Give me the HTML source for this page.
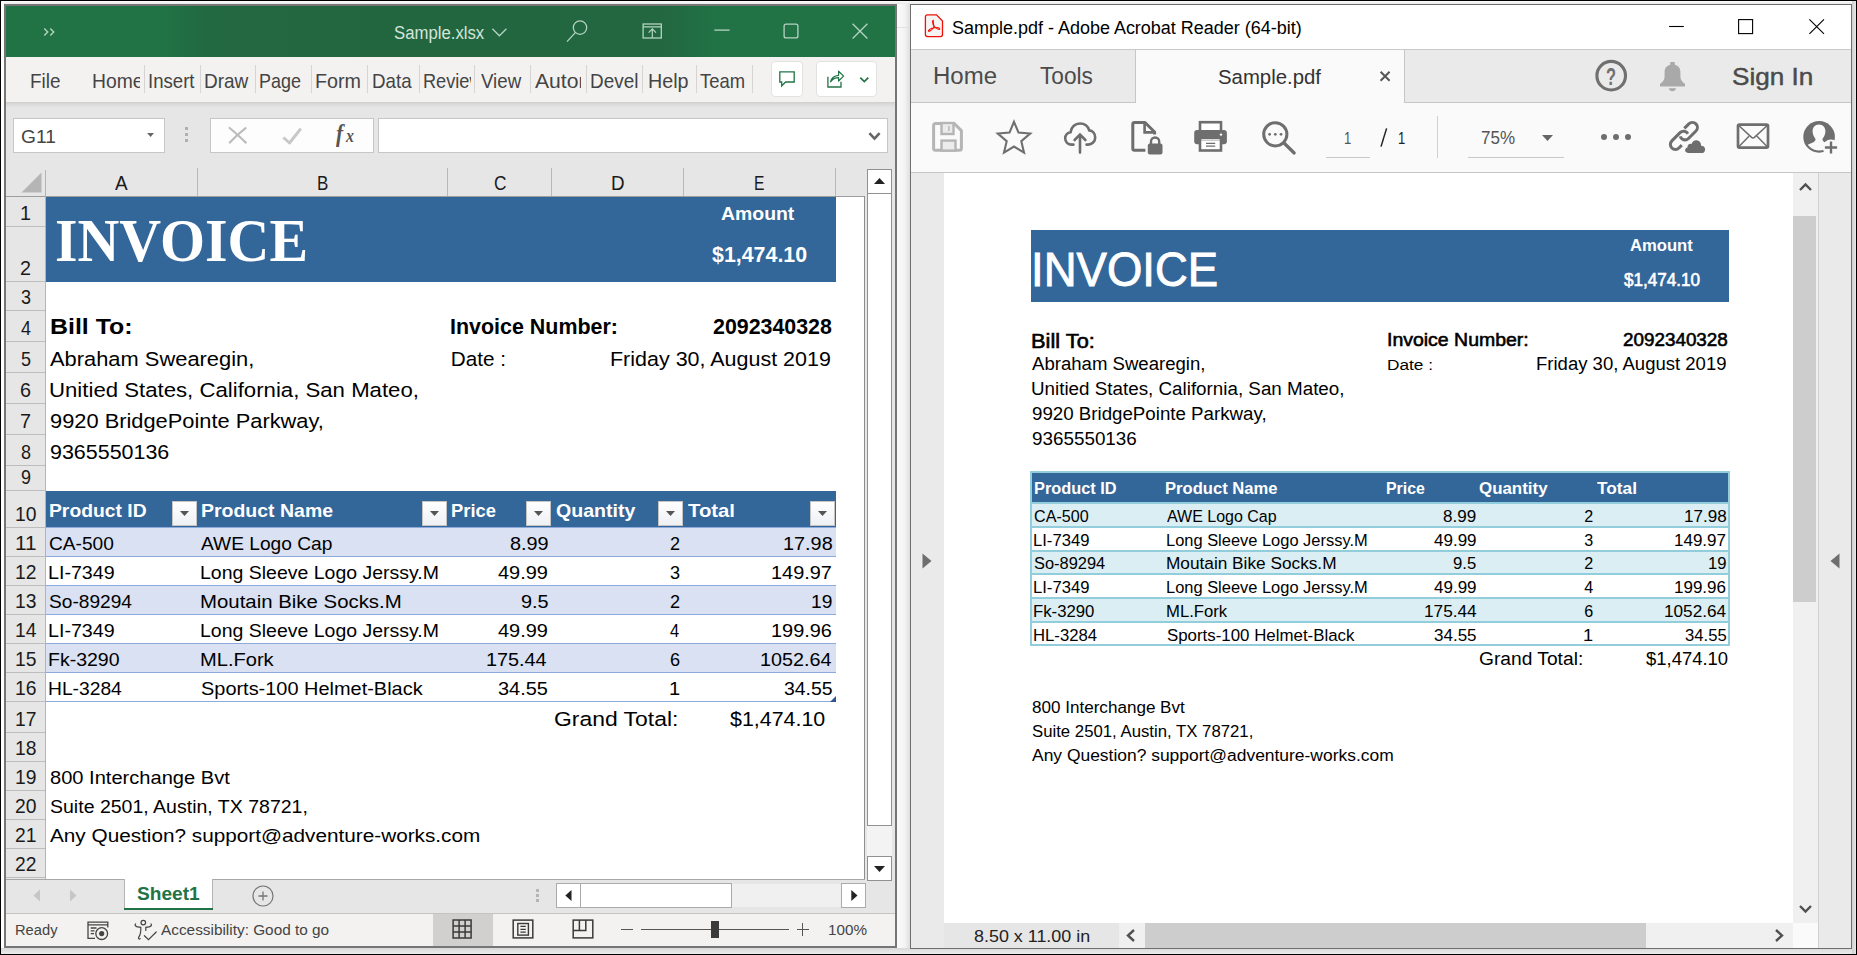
<!DOCTYPE html>
<html><head><meta charset="utf-8"><title>Sample.xlsx / Sample.pdf</title><style>
html,body{margin:0;padding:0}
body{width:1857px;height:955px;position:relative;overflow:hidden;background:#fff;font-family:"Liberation Sans",sans-serif}
body div{position:absolute;box-sizing:border-box}
.t{position:absolute;white-space:nowrap;line-height:0;height:0;transform-origin:0 0;display:block}

svg{position:absolute;overflow:visible}
</style></head>
<body>
<div style="left:0px;top:0px;width:1857px;height:955px;background:#fff;border:1px solid #000;"></div>
<div style="left:897px;top:1px;width:13px;height:953px;background:linear-gradient(90deg,#fbfbfb,#f3f3f3 60%,#dedede);"></div>
<div style="left:1px;top:948px;width:1855px;height:6px;background:linear-gradient(180deg,#d8d8d8,#ececec);"></div>
<div style="left:1px;top:1px;width:1855px;height:3px;background:linear-gradient(180deg,#fdfdfd,#e9e9e9);"></div>
<div style="left:1852px;top:1px;width:4px;height:953px;background:linear-gradient(90deg,#cfcfcf,#e6e6e6);"></div>
<div style="left:1px;top:1px;width:3px;height:947px;background:#fff;"></div>
<div style="left:897px;top:27px;width:12px;height:1px;background:#e2e2e2;"></div>
<div style="left:4px;top:4px;width:893px;height:944px;background:#767676;"></div>
<div style="left:6px;top:6px;width:889px;height:940px;background:#e6e6e6;"></div>
<div style="left:6px;top:6px;width:889px;height:51px;background:#217346;"></div>
<div style="left:160px;top:6px;width:560px;height:51px;background:linear-gradient(90deg,rgba(34,102,63,0),rgba(34,102,63,.85) 9%,rgba(34,102,63,1) 50%,rgba(34,102,63,.9) 90%,rgba(34,102,63,0));"></div>
<div style="left:6px;top:57px;width:889px;height:45px;background:#f3f2f1;"></div>
<div style="left:6px;top:102px;width:889px;height:6px;background:linear-gradient(180deg,#cfcfcf,#dcdcdc 45%,#e6e6e6);"></div>
<div style="left:144px;top:65px;width:1px;height:28px;background:#d6d4d2;"></div>
<div style="left:200px;top:65px;width:1px;height:28px;background:#d6d4d2;"></div>
<div style="left:255px;top:65px;width:1px;height:28px;background:#d6d4d2;"></div>
<div style="left:311px;top:65px;width:1px;height:28px;background:#d6d4d2;"></div>
<div style="left:367px;top:65px;width:1px;height:28px;background:#d6d4d2;"></div>
<div style="left:419px;top:65px;width:1px;height:28px;background:#d6d4d2;"></div>
<div style="left:474px;top:65px;width:1px;height:28px;background:#d6d4d2;"></div>
<div style="left:530px;top:65px;width:1px;height:28px;background:#d6d4d2;"></div>
<div style="left:586px;top:65px;width:1px;height:28px;background:#d6d4d2;"></div>
<div style="left:642px;top:65px;width:1px;height:28px;background:#d6d4d2;"></div>
<div style="left:696px;top:65px;width:1px;height:28px;background:#d6d4d2;"></div>
<div style="left:752px;top:65px;width:1px;height:28px;background:#d6d4d2;"></div>
<div style="left:771px;top:61px;width:32px;height:36px;background:#fff;border:1px solid #e4e2e0;border-radius:4px;"></div>
<div style="left:816px;top:61px;width:61px;height:36px;background:#fff;border:1px solid #e4e2e0;border-radius:4px;"></div>
<div style="left:13px;top:118px;width:152px;height:35px;background:#fff;border:1px solid #c6c6c6;"></div>
<div style="left:210px;top:118px;width:164px;height:35px;background:#fdfdfd;border:1px solid #c6c6c6;"></div>
<div style="left:378px;top:118px;width:510px;height:35px;background:#fff;border:1px solid #c6c6c6;"></div>
<div style="left:185px;top:127px;width:3px;height:3px;background:#b0b0b0;"></div>
<div style="left:185px;top:133px;width:3px;height:3px;background:#b0b0b0;"></div>
<div style="left:185px;top:139px;width:3px;height:3px;background:#b0b0b0;"></div>
<div style="left:46px;top:197px;width:819px;height:682px;background:#fff;"></div>
<div style="left:6px;top:170px;width:859px;height:27px;background:#e6e6e6;"></div>
<div style="left:6px;top:197px;width:40px;height:682px;background:#e6e6e6;"></div>
<div style="left:6px;top:196px;width:859px;height:1px;background:#9d9d9d;"></div>
<div style="left:45px;top:170px;width:1px;height:709px;background:#b4b4b4;"></div>
<div style="left:197px;top:168px;width:1px;height:28px;background:#b9b9b9;"></div>
<div style="left:447px;top:168px;width:1px;height:28px;background:#b9b9b9;"></div>
<div style="left:551px;top:168px;width:1px;height:28px;background:#b9b9b9;"></div>
<div style="left:683px;top:168px;width:1px;height:28px;background:#b9b9b9;"></div>
<div style="left:835px;top:168px;width:1px;height:28px;background:#b9b9b9;"></div>
<svg style="left:21px;top:172px" width="21" height="21"><path d="M20.5 0.5V20.5H0.5Z" fill="#b5b5b5"/></svg>
<div style="left:6px;top:226px;width:39px;height:1px;background:#bdbdbd;"></div>
<div style="left:6px;top:281px;width:39px;height:1px;background:#bdbdbd;"></div>
<div style="left:6px;top:310px;width:39px;height:1px;background:#bdbdbd;"></div>
<div style="left:6px;top:341px;width:39px;height:1px;background:#bdbdbd;"></div>
<div style="left:6px;top:372px;width:39px;height:1px;background:#bdbdbd;"></div>
<div style="left:6px;top:403px;width:39px;height:1px;background:#bdbdbd;"></div>
<div style="left:6px;top:434px;width:39px;height:1px;background:#bdbdbd;"></div>
<div style="left:6px;top:465px;width:39px;height:1px;background:#bdbdbd;"></div>
<div style="left:6px;top:490px;width:39px;height:1px;background:#bdbdbd;"></div>
<div style="left:6px;top:527px;width:39px;height:1px;background:#bdbdbd;"></div>
<div style="left:6px;top:556px;width:39px;height:1px;background:#bdbdbd;"></div>
<div style="left:6px;top:585px;width:39px;height:1px;background:#bdbdbd;"></div>
<div style="left:6px;top:614px;width:39px;height:1px;background:#bdbdbd;"></div>
<div style="left:6px;top:643px;width:39px;height:1px;background:#bdbdbd;"></div>
<div style="left:6px;top:672px;width:39px;height:1px;background:#bdbdbd;"></div>
<div style="left:6px;top:701px;width:39px;height:1px;background:#bdbdbd;"></div>
<div style="left:6px;top:732px;width:39px;height:1px;background:#bdbdbd;"></div>
<div style="left:6px;top:761px;width:39px;height:1px;background:#bdbdbd;"></div>
<div style="left:6px;top:790px;width:39px;height:1px;background:#bdbdbd;"></div>
<div style="left:6px;top:819px;width:39px;height:1px;background:#bdbdbd;"></div>
<div style="left:6px;top:848px;width:39px;height:1px;background:#bdbdbd;"></div>
<div style="left:6px;top:877px;width:39px;height:1px;background:#bdbdbd;"></div>
<div style="left:864px;top:196px;width:1px;height:683px;background:#8f8f8f;"></div>
<div style="left:6px;top:879px;width:859px;height:1px;background:#a8a8a8;"></div>
<div style="left:46px;top:197px;width:790px;height:85px;background:#336699;"></div>
<div style="left:46px;top:491px;width:790px;height:36px;background:#336699;"></div>
<div style="left:46px;top:528px;width:790px;height:28px;background:#d9e1f2;"></div>
<div style="left:46px;top:556px;width:790px;height:1px;background:#8ea9db;"></div>
<div style="left:46px;top:585px;width:790px;height:1px;background:#8ea9db;"></div>
<div style="left:46px;top:586px;width:790px;height:28px;background:#d9e1f2;"></div>
<div style="left:46px;top:614px;width:790px;height:1px;background:#8ea9db;"></div>
<div style="left:46px;top:643px;width:790px;height:1px;background:#8ea9db;"></div>
<div style="left:46px;top:644px;width:790px;height:28px;background:#d9e1f2;"></div>
<div style="left:46px;top:672px;width:790px;height:1px;background:#8ea9db;"></div>
<div style="left:46px;top:701px;width:790px;height:1px;background:#8ea9db;"></div>
<div style="left:46px;top:527px;width:790px;height:1px;background:#8ea9db;"></div>
<div style="left:830px;top:696px;width:6px;height:6px;background:#2f5597;clip-path:polygon(100% 0,100% 100%,0 100%);"></div>
<div style="left:172px;top:501px;width:25px;height:25px;background:linear-gradient(180deg,#ffffff,#eef0f4);border:1px solid #c4c4c4;"></div>
<svg style="left:180px;top:511px" width="9" height="5"><path d="M0 0H9L4.5 5Z" fill="#555"/></svg>
<div style="left:422px;top:501px;width:25px;height:25px;background:linear-gradient(180deg,#ffffff,#eef0f4);border:1px solid #c4c4c4;"></div>
<svg style="left:430px;top:511px" width="9" height="5"><path d="M0 0H9L4.5 5Z" fill="#555"/></svg>
<div style="left:526px;top:501px;width:25px;height:25px;background:linear-gradient(180deg,#ffffff,#eef0f4);border:1px solid #c4c4c4;"></div>
<svg style="left:534px;top:511px" width="9" height="5"><path d="M0 0H9L4.5 5Z" fill="#555"/></svg>
<div style="left:658px;top:501px;width:25px;height:25px;background:linear-gradient(180deg,#ffffff,#eef0f4);border:1px solid #c4c4c4;"></div>
<svg style="left:666px;top:511px" width="9" height="5"><path d="M0 0H9L4.5 5Z" fill="#555"/></svg>
<div style="left:810px;top:501px;width:25px;height:25px;background:linear-gradient(180deg,#ffffff,#eef0f4);border:1px solid #c4c4c4;"></div>
<svg style="left:818px;top:511px" width="9" height="5"><path d="M0 0H9L4.5 5Z" fill="#555"/></svg>
<div style="left:866px;top:170px;width:29px;height:709px;background:#e6e6e6;"></div>
<div style="left:867px;top:169px;width:25px;height:25px;background:#fff;border:1px solid #919191;"></div>
<div style="left:867px;top:193px;width:25px;height:633px;background:#fff;border:1px solid #919191;"></div>
<div style="left:867px;top:826px;width:25px;height:30px;background:#f3f3f3;"></div>
<div style="left:867px;top:856px;width:25px;height:25px;background:#fff;border:1px solid #919191;"></div>
<svg style="left:874px;top:178px" width="11" height="6"><path d="M0 6L5.5 0L11 6Z" fill="#222"/></svg>
<svg style="left:874px;top:866px" width="11" height="6"><path d="M0 0L5.5 6L11 0Z" fill="#222"/></svg>
<div style="left:6px;top:880px;width:860px;height:33px;background:#e6e6e6;"></div>
<div style="left:866px;top:881px;width:29px;height:32px;background:#e6e6e6;"></div>
<div style="left:124px;top:879px;width:89px;height:31px;background:#fff;border-left:1px solid #b4b4b4;border-right:1px solid #b4b4b4;"></div>
<div style="left:124px;top:908px;width:89px;height:2px;background:#217346;"></div>
<svg style="left:33px;top:889px" width="8" height="13"><path d="M7 0.5V12.5L0.5 6.5Z" fill="#c6c6c6"/></svg>
<svg style="left:69px;top:889px" width="8" height="13"><path d="M1 0.5V12.5L7.5 6.5Z" fill="#c6c6c6"/></svg>
<svg style="left:252px;top:885px" width="22" height="22"><circle cx="11" cy="11" r="10" fill="none" stroke="#767676" stroke-width="1.2"/><path d="M11 6.5V15.5M6.5 11H15.5" stroke="#767676" stroke-width="1.3"/></svg>
<div style="left:536px;top:889px;width:3px;height:3px;background:#b5b5b5;"></div>
<div style="left:536px;top:894px;width:3px;height:3px;background:#b5b5b5;"></div>
<div style="left:536px;top:899px;width:3px;height:3px;background:#b5b5b5;"></div>
<div style="left:556px;top:883px;width:25px;height:25px;background:#fff;border:1px solid #ababab;"></div>
<div style="left:580px;top:883px;width:152px;height:25px;background:#fff;border:1px solid #ababab;"></div>
<div style="left:841px;top:883px;width:25px;height:25px;background:#fff;border:1px solid #ababab;"></div>
<div style="left:732px;top:884px;width:109px;height:23px;background:#f0f0f0;"></div>
<svg style="left:565px;top:890px" width="7" height="11"><path d="M6.5 0V11L0.3 5.5Z" fill="#222"/></svg>
<svg style="left:851px;top:890px" width="7" height="11"><path d="M0.3 0V11L6.5 5.5Z" fill="#222"/></svg>
<div style="left:6px;top:914px;width:889px;height:32px;background:#f3f2f1;"></div>
<div style="left:6px;top:913px;width:889px;height:1px;background:#c4c4c4;"></div>
<div style="left:433px;top:914px;width:60px;height:32px;background:#d2d0ce;"></div>
<div style="left:641px;top:929px;width:148px;height:1px;background:#555;"></div>
<div style="left:711px;top:921px;width:8px;height:17px;background:#3b3b3b;"></div>
<div style="left:621px;top:929px;width:12px;height:1px;background:#555;"></div>
<div style="left:797px;top:929px;width:12px;height:1px;background:#555;"></div>
<div style="left:802px;top:923px;width:1px;height:13px;background:#555;"></div>
<span class="t" style="left:394.30px;top:32.50px;font-size:18.87px;color:#d3e5da;transform:scaleX(0.8872);">Sample.xlsx</span>
<span class="t" style="left:30.30px;top:81.00px;font-size:19.89px;color:#444;transform:scaleX(0.9525);">File</span>
<div style="left:90px;top:60px;width:50px;height:40px;overflow:hidden">
<span class="t" style="left:1.53px;top:21.00px;font-size:19.89px;color:#444;transform:scaleX(0.9719);">Home</span>
</div>
<span class="t" style="left:147.81px;top:81.00px;font-size:19.89px;color:#444;transform:scaleX(0.9352);">Insert</span>
<span class="t" style="left:204.04px;top:81.00px;font-size:19.89px;color:#444;transform:scaleX(0.9560);">Draw</span>
<span class="t" style="left:259.10px;top:81.00px;font-size:19.89px;color:#444;transform:scaleX(0.9038);">Page</span>
<span class="t" style="left:314.76px;top:81.00px;font-size:19.89px;color:#444;transform:scaleX(0.9930);">Form</span>
<span class="t" style="left:372.06px;top:81.00px;font-size:19.89px;color:#444;transform:scaleX(0.9421);">Data</span>
<div style="left:420px;top:60px;width:51px;height:40px;overflow:hidden">
<span class="t" style="left:2.84px;top:21.00px;font-size:19.89px;color:#444;transform:scaleX(0.9142);">Review</span>
</div>
<span class="t" style="left:481.25px;top:81.00px;font-size:19.89px;color:#444;transform:scaleX(0.9397);">View</span>
<div style="left:530px;top:60px;width:51px;height:40px;overflow:hidden">
<span class="t" style="left:4.50px;top:21.00px;font-size:19.89px;color:#444;transform:scaleX(1.0635);">Autom</span>
</div>
<div style="left:588px;top:60px;width:50px;height:40px;overflow:hidden">
<span class="t" style="left:1.55px;top:21.00px;font-size:19.89px;color:#444;transform:scaleX(0.9515);">Devel</span>
</div>
<span class="t" style="left:647.76px;top:81.00px;font-size:19.89px;color:#444;transform:scaleX(0.9919);">Help</span>
<span class="t" style="left:700.00px;top:81.00px;font-size:19.89px;color:#444;transform:scaleX(0.9263);">Team</span>
<span class="t" style="left:20.50px;top:136.50px;font-size:18.56px;color:#444;transform:scaleX(1.0341);">G11</span>
<span class="t" style="left:114.90px;top:182.90px;font-size:20.4px;color:#1a1a1a;transform:scaleX(0.9286);">A</span>
<span class="t" style="left:316.77px;top:182.90px;font-size:20.4px;color:#1a1a1a;transform:scaleX(0.8333);">B</span>
<span class="t" style="left:493.65px;top:182.90px;font-size:20.4px;color:#1a1a1a;transform:scaleX(0.8462);">C</span>
<span class="t" style="left:610.68px;top:182.90px;font-size:20.4px;color:#1a1a1a;transform:scaleX(0.9231);">D</span>
<span class="t" style="left:754.13px;top:182.90px;font-size:20.4px;color:#1a1a1a;transform:scaleX(0.7667);">E</span>
<span class="t" style="left:20.08px;top:212.80px;font-size:20.4px;color:#1a1a1a;transform:scaleX(0.9700);">1</span>
<span class="t" style="left:20.08px;top:267.80px;font-size:20.4px;color:#1a1a1a;transform:scaleX(0.9700);">2</span>
<span class="t" style="left:21.05px;top:296.80px;font-size:20.4px;color:#1a1a1a;transform:scaleX(0.8818);">3</span>
<span class="t" style="left:21.05px;top:327.80px;font-size:20.4px;color:#1a1a1a;transform:scaleX(0.8818);">4</span>
<span class="t" style="left:21.05px;top:358.80px;font-size:20.4px;color:#1a1a1a;transform:scaleX(0.8818);">5</span>
<span class="t" style="left:20.08px;top:389.80px;font-size:20.4px;color:#1a1a1a;transform:scaleX(0.9700);">6</span>
<span class="t" style="left:20.08px;top:420.80px;font-size:20.4px;color:#1a1a1a;transform:scaleX(0.9700);">7</span>
<span class="t" style="left:21.05px;top:451.80px;font-size:20.4px;color:#1a1a1a;transform:scaleX(0.8818);">8</span>
<span class="t" style="left:21.05px;top:476.80px;font-size:20.4px;color:#1a1a1a;transform:scaleX(0.8818);">9</span>
<span class="t" style="left:14.85px;top:513.80px;font-size:20.4px;color:#1a1a1a;transform:scaleX(0.9466);">10</span>
<span class="t" style="left:14.78px;top:542.80px;font-size:20.4px;color:#1a1a1a;transform:scaleX(1.0189);">11</span>
<span class="t" style="left:14.85px;top:571.80px;font-size:20.4px;color:#1a1a1a;transform:scaleX(0.9466);">12</span>
<span class="t" style="left:14.85px;top:600.80px;font-size:20.4px;color:#1a1a1a;transform:scaleX(0.9466);">13</span>
<span class="t" style="left:14.85px;top:629.80px;font-size:20.4px;color:#1a1a1a;transform:scaleX(0.9466);">14</span>
<span class="t" style="left:14.85px;top:658.80px;font-size:20.4px;color:#1a1a1a;transform:scaleX(0.9466);">15</span>
<span class="t" style="left:14.85px;top:687.80px;font-size:20.4px;color:#1a1a1a;transform:scaleX(0.9466);">16</span>
<span class="t" style="left:14.85px;top:718.80px;font-size:20.4px;color:#1a1a1a;transform:scaleX(0.9466);">17</span>
<span class="t" style="left:14.85px;top:747.80px;font-size:20.4px;color:#1a1a1a;transform:scaleX(0.9466);">18</span>
<span class="t" style="left:14.85px;top:776.80px;font-size:20.4px;color:#1a1a1a;transform:scaleX(0.9466);">19</span>
<span class="t" style="left:14.85px;top:805.80px;font-size:20.4px;color:#1a1a1a;transform:scaleX(0.9466);">20</span>
<span class="t" style="left:14.85px;top:834.80px;font-size:20.4px;color:#1a1a1a;transform:scaleX(0.9466);">21</span>
<span class="t" style="left:14.85px;top:863.80px;font-size:20.4px;color:#1a1a1a;transform:scaleX(0.9466);">22</span>
<span class="t" style="left:55.11px;top:239.50px;font-size:61.2px;color:#fff;font-family:'Liberation Serif',serif;font-weight:bold;transform:scaleX(0.9465);">INVOICE</span>
<span class="t" style="left:720.50px;top:213.50px;font-size:19.04px;color:#fff;font-weight:bold;transform:scaleX(1.0201);">Amount</span>
<span class="t" style="left:711.75px;top:255.00px;font-size:21.76px;color:#fff;font-weight:bold;transform:scaleX(0.9828);">$1,474.10</span>
<span class="t" style="left:50.10px;top:327.00px;font-size:21.76px;color:#000;font-weight:bold;transform:scaleX(1.1456);">Bill To:</span>
<span class="t" style="left:450.26px;top:326.50px;font-size:21.76px;color:#000;font-weight:bold;transform:scaleX(0.9856);">Invoice Number:</span>
<span class="t" style="left:712.50px;top:326.50px;font-size:21.76px;color:#000;font-weight:bold;transform:scaleX(0.9825);">2092340328</span>
<span class="t" style="left:49.60px;top:358.80px;font-size:20.71px;color:#000;transform:scaleX(1.0565);">Abraham Swearegin,</span>
<span class="t" style="left:48.93px;top:389.80px;font-size:20.71px;color:#000;transform:scaleX(1.0716);">Unitied States, California, San Mateo,</span>
<span class="t" style="left:50.00px;top:420.80px;font-size:20.71px;color:#000;transform:scaleX(1.0544);">9920 BridgePointe Parkway,</span>
<span class="t" style="left:50.00px;top:451.80px;font-size:20.71px;color:#000;transform:scaleX(1.0360);">9365550136</span>
<span class="t" style="left:450.75px;top:358.80px;font-size:20.71px;color:#000;">Date :</span>
<span class="t" style="left:609.71px;top:358.80px;font-size:20.71px;color:#000;transform:scaleX(1.0374);">Friday 30, August 2019</span>
<span class="t" style="left:48.95px;top:510.60px;font-size:18.36px;color:#fff;font-weight:bold;transform:scaleX(1.0512);">Product ID</span>
<span class="t" style="left:200.69px;top:510.60px;font-size:18.36px;color:#fff;font-weight:bold;transform:scaleX(1.0608);">Product Name</span>
<span class="t" style="left:450.75px;top:510.60px;font-size:18.36px;color:#fff;font-weight:bold;transform:scaleX(1.0011);">Price</span>
<span class="t" style="left:555.50px;top:510.60px;font-size:18.36px;color:#fff;font-weight:bold;transform:scaleX(1.0665);">Quantity</span>
<span class="t" style="left:687.50px;top:510.60px;font-size:18.36px;color:#fff;font-weight:bold;transform:scaleX(1.1053);">Total</span>
<span class="t" style="left:49.30px;top:543.80px;font-size:19.07px;color:#000;transform:scaleX(1.0026);">CA-500</span>
<span class="t" style="left:201.30px;top:543.80px;font-size:19.07px;color:#000;transform:scaleX(1.0048);">AWE Logo Cap</span>
<span class="t" style="left:509.50px;top:543.80px;font-size:19.07px;color:#000;transform:scaleX(1.0411);">8.99</span>
<span class="t" style="left:669.70px;top:543.80px;font-size:19.07px;color:#000;transform:scaleX(0.9500);">2</span>
<span class="t" style="left:782.71px;top:543.80px;font-size:19.07px;color:#000;transform:scaleX(1.0412);">17.98</span>
<span class="t" style="left:48.27px;top:572.80px;font-size:19.07px;color:#000;transform:scaleX(1.0309);">LI-7349</span>
<span class="t" style="left:200.28px;top:572.80px;font-size:19.07px;color:#000;transform:scaleX(1.0218);">Long Sleeve Logo Jerssy.M</span>
<span class="t" style="left:498.25px;top:572.80px;font-size:19.07px;color:#000;transform:scaleX(1.0456);">49.99</span>
<span class="t" style="left:669.70px;top:572.80px;font-size:19.07px;color:#000;transform:scaleX(0.9500);">3</span>
<span class="t" style="left:771.46px;top:572.80px;font-size:19.07px;color:#000;transform:scaleX(1.0449);">149.97</span>
<span class="t" style="left:49.30px;top:601.80px;font-size:19.07px;color:#000;transform:scaleX(1.0028);">So-89294</span>
<span class="t" style="left:200.23px;top:601.80px;font-size:19.07px;color:#000;transform:scaleX(1.0696);">Moutain Bike Socks.M</span>
<span class="t" style="left:520.50px;top:601.80px;font-size:19.07px;color:#000;transform:scaleX(1.0426);">9.5</span>
<span class="t" style="left:669.70px;top:601.80px;font-size:19.07px;color:#000;transform:scaleX(0.9500);">2</span>
<span class="t" style="left:810.99px;top:601.80px;font-size:19.07px;color:#000;transform:scaleX(1.0076);">19</span>
<span class="t" style="left:48.27px;top:630.80px;font-size:19.07px;color:#000;transform:scaleX(1.0309);">LI-7349</span>
<span class="t" style="left:200.28px;top:630.80px;font-size:19.07px;color:#000;transform:scaleX(1.0218);">Long Sleeve Logo Jerssy.M</span>
<span class="t" style="left:498.25px;top:630.80px;font-size:19.07px;color:#000;transform:scaleX(1.0456);">49.99</span>
<span class="t" style="left:669.70px;top:630.80px;font-size:19.07px;color:#000;transform:scaleX(0.8636);">4</span>
<span class="t" style="left:771.46px;top:630.80px;font-size:19.07px;color:#000;transform:scaleX(1.0449);">199.96</span>
<span class="t" style="left:48.28px;top:659.80px;font-size:19.07px;color:#000;transform:scaleX(1.0230);">Fk-3290</span>
<span class="t" style="left:200.25px;top:659.80px;font-size:19.07px;color:#000;transform:scaleX(1.0538);">ML.Fork</span>
<span class="t" style="left:486.46px;top:659.80px;font-size:19.07px;color:#000;transform:scaleX(1.0398);">175.44</span>
<span class="t" style="left:669.70px;top:659.80px;font-size:19.07px;color:#000;transform:scaleX(0.9500);">6</span>
<span class="t" style="left:759.86px;top:659.80px;font-size:19.07px;color:#000;transform:scaleX(1.0373);">1052.64</span>
<span class="t" style="left:48.29px;top:688.80px;font-size:19.07px;color:#000;transform:scaleX(1.0094);">HL-3284</span>
<span class="t" style="left:201.30px;top:688.80px;font-size:19.07px;color:#000;transform:scaleX(1.0459);">Sports-100 Helmet-Black</span>
<span class="t" style="left:498.25px;top:688.80px;font-size:19.07px;color:#000;transform:scaleX(1.0456);">34.55</span>
<span class="t" style="left:668.64px;top:688.80px;font-size:19.07px;color:#000;transform:scaleX(1.0556);">1</span>
<span class="t" style="left:783.75px;top:688.80px;font-size:19.07px;color:#000;transform:scaleX(1.0191);">34.55</span>
<span class="t" style="left:554.49px;top:718.80px;font-size:20.71px;color:#000;transform:scaleX(1.1061);">Grand Total:</span>
<span class="t" style="left:729.60px;top:718.80px;font-size:20.71px;color:#000;transform:scaleX(1.0340);">$1,474.10</span>
<span class="t" style="left:49.50px;top:777.80px;font-size:19.07px;color:#000;transform:scaleX(1.0535);">800 Interchange Bvt</span>
<span class="t" style="left:49.50px;top:806.80px;font-size:19.07px;color:#000;transform:scaleX(1.0239);">Suite 2501, Austin, TX 78721,</span>
<span class="t" style="left:49.50px;top:835.80px;font-size:19.07px;color:#000;transform:scaleX(1.0879);">Any Question? support@adventure-works.com</span>
<span class="t" style="left:136.50px;top:894.30px;font-size:18.36px;color:#217346;font-weight:bold;transform:scaleX(1.0417);">Sheet1</span>
<span class="t" style="left:15.32px;top:930.30px;font-size:14.99px;color:#444;transform:scaleX(0.9808);">Ready</span>
<span class="t" style="left:160.70px;top:930.30px;font-size:14.99px;color:#444;transform:scaleX(1.0248);">Accessibility: Good to go</span>
<span class="t" style="left:827.78px;top:930.30px;font-size:14.99px;color:#444;transform:scaleX(1.0162);">100%</span>
<div style="left:910px;top:4px;width:942px;height:945px;background:#6f6f6f;"></div>
<div style="left:911px;top:5px;width:940px;height:943px;background:#eaeaea;"></div>
<div style="left:911px;top:5px;width:940px;height:44px;background:#fff;"></div>
<div style="left:911px;top:49px;width:940px;height:1px;background:#c9c9c9;"></div>
<div style="left:911px;top:50px;width:940px;height:52px;background:#eaeaea;"></div>
<div style="left:911px;top:102px;width:940px;height:1px;background:#c6c6c6;"></div>
<div style="left:1135px;top:50px;width:270px;height:53px;background:#fafafa;border-left:1px solid #c6c6c6;border-right:1px solid #c6c6c6;"></div>
<div style="left:911px;top:103px;width:940px;height:69px;background:#fafafa;"></div>
<div style="left:911px;top:172px;width:940px;height:1px;background:#c6c6c6;"></div>
<div style="left:911px;top:173px;width:33px;height:775px;background:#eaeaea;"></div>
<div style="left:944px;top:173px;width:849px;height:750px;background:#fff;"></div>
<div style="left:1793px;top:173px;width:25px;height:750px;background:#f0f0f0;"></div>
<div style="left:1793px;top:216px;width:23px;height:386px;background:#cdcdcd;"></div>
<div style="left:1818px;top:173px;width:1px;height:775px;background:#d0d0d0;"></div>
<div style="left:1819px;top:173px;width:32px;height:775px;background:#eaeaea;"></div>
<div style="left:944px;top:923px;width:175px;height:25px;background:#e6e6e6;"></div>
<div style="left:1119px;top:923px;width:674px;height:25px;background:#f0f0f0;"></div>
<div style="left:1145px;top:923px;width:501px;height:25px;background:#cdcdcd;"></div>
<div style="left:1793px;top:923px;width:25px;height:25px;background:#fafafa;"></div>
<svg style="left:1799px;top:183px" width="13" height="8"><path d="M1 7L6.5 1.5L12 7" fill="none" stroke="#505050" stroke-width="2.4"/></svg>
<svg style="left:1799px;top:905px" width="13" height="8"><path d="M1 1L6.5 6.5L12 1" fill="none" stroke="#505050" stroke-width="2.4"/></svg>
<svg style="left:1126px;top:929px" width="9" height="13"><path d="M8 1L2 6.5L8 12" fill="none" stroke="#505050" stroke-width="2.4"/></svg>
<svg style="left:1775px;top:929px" width="9" height="13"><path d="M1 1L7 6.5L1 12" fill="none" stroke="#505050" stroke-width="2.4"/></svg>
<svg style="left:922px;top:553px" width="10" height="16"><path d="M0.5 0.5V15.5L9.5 8Z" fill="#6e6e6e"/></svg>
<svg style="left:1830px;top:553px" width="10" height="16"><path d="M9.5 0.5V15.5L0.5 8Z" fill="#6e6e6e"/></svg>
<div style="left:1326px;top:157px;width:44px;height:1px;background:#c8c8c8;"></div>
<div style="left:1468px;top:157px;width:96px;height:1px;background:#c8c8c8;"></div>
<div style="left:1437px;top:116px;width:1px;height:42px;background:#d0d0d0;"></div>
<svg style="left:1542px;top:135px" width="11" height="6"><path d="M0 0H11L5.5 6Z" fill="#666"/></svg>
<div style="left:1601px;top:134px;width:6px;height:6px;background:#6e6e6e;border-radius:50%;"></div>
<div style="left:1613px;top:134px;width:6px;height:6px;background:#6e6e6e;border-radius:50%;"></div>
<div style="left:1625px;top:134px;width:6px;height:6px;background:#6e6e6e;border-radius:50%;"></div>
<div style="left:1031px;top:230px;width:698px;height:72px;background:#336699;"></div>
<div style="left:1030px;top:471px;width:700px;height:175px;background:#92cddc;"></div>
<div style="left:1032px;top:473px;width:696px;height:29px;background:#336699;"></div>
<div style="left:1032px;top:504px;width:696px;height:22px;background:#daeef3;"></div>
<div style="left:1032px;top:528px;width:696px;height:22px;background:#fff;"></div>
<div style="left:1032px;top:552px;width:696px;height:21px;background:#daeef3;"></div>
<div style="left:1032px;top:575px;width:696px;height:22px;background:#fff;"></div>
<div style="left:1032px;top:599px;width:696px;height:22px;background:#daeef3;"></div>
<div style="left:1032px;top:623px;width:696px;height:21px;background:#fff;"></div>
<span class="t" style="left:951.75px;top:27.75px;font-size:17.85px;color:#000;transform:scaleX(1.0074);">Sample.pdf - Adobe Acrobat Reader (64-bit)</span>
<span class="t" style="left:933.24px;top:75.75px;font-size:23.87px;color:#4b4b4b;transform:scaleX(1.0060);">Home</span>
<span class="t" style="left:1040.00px;top:75.75px;font-size:23.87px;color:#4b4b4b;transform:scaleX(0.9504);">Tools</span>
<span class="t" style="left:1217.50px;top:76.75px;font-size:20.71px;color:#323232;transform:scaleX(0.9836);">Sample.pdf</span>
<span class="t" style="left:1732.31px;top:77.20px;font-size:23.87px;color:#4b4b4b;transform:scaleX(1.0943);-webkit-text-stroke:0.45px #4b4b4b;">Sign In</span>
<span class="t" style="left:1344.25px;top:137.60px;font-size:17.34px;color:#555;transform:scaleX(0.7500);">1</span>
<svg style="left:1378px;top:126px" width="12" height="23" viewBox="1378 126 12 23"><path d="M1381 146.6L1386.6 128.4" stroke="#222" stroke-width="1.5"/></svg>
<span class="t" style="left:1398.25px;top:137.60px;font-size:17.34px;color:#222;transform:scaleX(0.7500);">1</span>
<span class="t" style="left:1480.60px;top:137.60px;font-size:17.85px;color:#555;transform:scaleX(0.9540);">75%</span>
<span class="t" style="left:973.70px;top:936.40px;font-size:17.34px;color:#222;transform:scaleX(1.0335);">8.50 x 11.00 in</span>
<span class="t" style="left:1030.89px;top:269.90px;font-size:47.74px;color:#fff;transform:scaleX(0.9536);-webkit-text-stroke:0.9px #fff;">INVOICE</span>
<span class="t" style="left:1630.00px;top:245.10px;font-size:16.32px;color:#fff;font-weight:bold;transform:scaleX(1.0197);">Amount</span>
<span class="t" style="left:1623.90px;top:280.20px;font-size:17.85px;color:#fff;transform:scaleX(0.9590);-webkit-text-stroke:0.6px #fff;">$1,474.10</span>
<span class="t" style="left:1031.12px;top:340.60px;font-size:20.2px;color:#000;transform:scaleX(1.0801);-webkit-text-stroke:0.6px #000;">Bill To:</span>
<span class="t" style="left:1387.10px;top:339.70px;font-size:17.75px;color:#000;transform:scaleX(1.0966);-webkit-text-stroke:0.55px #000;">Invoice Number:</span>
<span class="t" style="left:1623.30px;top:339.70px;font-size:17.54px;color:#000;transform:scaleX(1.0749);-webkit-text-stroke:0.55px #000;">2092340328</span>
<span class="t" style="left:1031.50px;top:363.70px;font-size:17.54px;color:#000;transform:scaleX(1.0593);">Abraham Swearegin,</span>
<span class="t" style="left:1030.63px;top:388.70px;font-size:17.54px;color:#000;transform:scaleX(1.0724);">Unitied States, California, San Mateo,</span>
<span class="t" style="left:1031.70px;top:413.70px;font-size:17.54px;color:#000;transform:scaleX(1.0669);">9920 BridgePointe Parkway,</span>
<span class="t" style="left:1031.70px;top:438.70px;font-size:17.54px;color:#000;transform:scaleX(1.0749);">9365550136</span>
<span class="t" style="left:1387.08px;top:364.80px;font-size:15.4px;color:#000;transform:scaleX(1.1215);">Date :</span>
<span class="t" style="left:1536.14px;top:363.70px;font-size:17.54px;color:#000;transform:scaleX(1.0567);">Friday 30, August 2019</span>
<span class="t" style="left:1033.97px;top:488.80px;font-size:15.91px;color:#fff;font-weight:bold;transform:scaleX(1.0275);">Product ID</span>
<span class="t" style="left:1165.46px;top:488.80px;font-size:15.91px;color:#fff;font-weight:bold;transform:scaleX(1.0431);">Product Name</span>
<span class="t" style="left:1386.00px;top:488.80px;font-size:15.91px;color:#fff;font-weight:bold;transform:scaleX(0.9983);">Price</span>
<span class="t" style="left:1478.60px;top:488.80px;font-size:15.91px;color:#fff;font-weight:bold;transform:scaleX(1.0624);">Quantity</span>
<span class="t" style="left:1596.60px;top:488.80px;font-size:15.91px;color:#fff;font-weight:bold;transform:scaleX(1.0853);">Total</span>
<span class="t" style="left:1034.00px;top:515.80px;font-size:16.12px;color:#000;">CA-500</span>
<span class="t" style="left:1166.80px;top:515.80px;font-size:16.12px;color:#000;transform:scaleX(0.9930);">AWE Logo Cap</span>
<span class="t" style="left:1443.40px;top:515.80px;font-size:16.12px;color:#000;transform:scaleX(1.0575);">8.99</span>
<span class="t" style="left:1584.20px;top:515.80px;font-size:16.12px;color:#000;">2</span>
<span class="t" style="left:1683.64px;top:515.80px;font-size:16.12px;color:#000;transform:scaleX(1.0596);">17.98</span>
<span class="t" style="left:1032.97px;top:539.60px;font-size:16.12px;color:#000;transform:scaleX(1.0321);">LI-7349</span>
<span class="t" style="left:1165.78px;top:539.60px;font-size:16.12px;color:#000;transform:scaleX(1.0205);">Long Sleeve Logo Jerssy.M</span>
<span class="t" style="left:1434.00px;top:539.60px;font-size:16.12px;color:#000;transform:scaleX(1.0557);">49.99</span>
<span class="t" style="left:1584.20px;top:539.60px;font-size:16.12px;color:#000;">3</span>
<span class="t" style="left:1674.34px;top:539.60px;font-size:16.12px;color:#000;transform:scaleX(1.0556);">149.97</span>
<span class="t" style="left:1034.00px;top:563.30px;font-size:16.12px;color:#000;transform:scaleX(1.0185);">So-89294</span>
<span class="t" style="left:1165.73px;top:563.30px;font-size:16.12px;color:#000;transform:scaleX(1.0700);">Moutain Bike Socks.M</span>
<span class="t" style="left:1453.40px;top:563.30px;font-size:16.12px;color:#000;transform:scaleX(1.0341);">9.5</span>
<span class="t" style="left:1584.20px;top:563.30px;font-size:16.12px;color:#000;">2</span>
<span class="t" style="left:1707.87px;top:563.30px;font-size:16.12px;color:#000;transform:scaleX(1.0319);">19</span>
<span class="t" style="left:1032.97px;top:587.00px;font-size:16.12px;color:#000;transform:scaleX(1.0321);">LI-7349</span>
<span class="t" style="left:1165.78px;top:587.00px;font-size:16.12px;color:#000;transform:scaleX(1.0205);">Long Sleeve Logo Jerssy.M</span>
<span class="t" style="left:1434.00px;top:587.00px;font-size:16.12px;color:#000;transform:scaleX(1.0557);">49.99</span>
<span class="t" style="left:1584.20px;top:587.00px;font-size:16.12px;color:#000;">4</span>
<span class="t" style="left:1674.34px;top:587.00px;font-size:16.12px;color:#000;transform:scaleX(1.0556);">199.96</span>
<span class="t" style="left:1032.96px;top:610.80px;font-size:16.12px;color:#000;transform:scaleX(1.0389);">Fk-3290</span>
<span class="t" style="left:1165.76px;top:610.80px;font-size:16.12px;color:#000;transform:scaleX(1.0353);">ML.Fork</span>
<span class="t" style="left:1423.93px;top:610.80px;font-size:16.12px;color:#000;transform:scaleX(1.0680);">175.44</span>
<span class="t" style="left:1584.20px;top:610.80px;font-size:16.12px;color:#000;">6</span>
<span class="t" style="left:1664.23px;top:610.80px;font-size:16.12px;color:#000;transform:scaleX(1.0668);">1052.64</span>
<span class="t" style="left:1032.96px;top:634.70px;font-size:16.12px;color:#000;transform:scaleX(1.0372);">HL-3284</span>
<span class="t" style="left:1166.80px;top:634.70px;font-size:16.12px;color:#000;transform:scaleX(1.0466);">Sports-100 Helmet-Black</span>
<span class="t" style="left:1434.00px;top:634.70px;font-size:16.12px;color:#000;transform:scaleX(1.0557);">34.55</span>
<span class="t" style="left:1583.08px;top:634.70px;font-size:16.12px;color:#000;transform:scaleX(1.1250);">1</span>
<span class="t" style="left:1684.70px;top:634.70px;font-size:16.12px;color:#000;transform:scaleX(1.0334);">34.55</span>
<span class="t" style="left:1478.60px;top:658.70px;font-size:17.65px;color:#000;transform:scaleX(1.0883);">Grand Total:</span>
<span class="t" style="left:1645.50px;top:658.70px;font-size:17.65px;color:#000;transform:scaleX(1.0462);">$1,474.10</span>
<span class="t" style="left:1031.70px;top:706.70px;font-size:16.22px;color:#000;transform:scaleX(1.0534);">800 Interchange Bvt</span>
<span class="t" style="left:1031.70px;top:730.60px;font-size:16.22px;color:#000;transform:scaleX(1.0336);">Suite 2501, Austin, TX 78721,</span>
<span class="t" style="left:1031.70px;top:754.60px;font-size:16.22px;color:#000;transform:scaleX(1.0758);">Any Question? support@adventure-works.com</span>
<svg style="left:40px;top:24px" width="16" height="14" viewBox="40 24 16 14"><path d="M44.3 28.6L47.7 32L44.3 35.4M50.3 28.6L53.7 32L50.3 35.4" fill="none" stroke="#b4d3c1" stroke-width="1.4"/></svg>
<svg style="left:490px;top:26px" width="20" height="12" viewBox="490 26 20 12"><path d="M492.4 28.8L499.4 35.8L506.4 28.8" fill="none" stroke="#b4d3c1" stroke-width="1.3"/></svg>
<svg style="left:564px;top:18px" width="28" height="28" viewBox="564 18 28 28"><circle cx="580" cy="27.6" r="6.7" fill="none" stroke="#b4d3c1" stroke-width="1.3"/><path d="M575.3 32.6L567 41.6" stroke="#b4d3c1" stroke-width="1.3"/></svg>
<svg style="left:640px;top:21px" width="24" height="20" viewBox="640 21 24 20"><rect x="643.1" y="24" width="18.2" height="14" fill="none" stroke="#b4d3c1" stroke-width="1.3"/><path d="M643 26.8H661.5M652.3 38V29M648.6 32.6L652.3 28.9L656 32.6" fill="none" stroke="#b4d3c1" stroke-width="1.2"/></svg>
<svg style="left:712px;top:22px" width="160" height="20" viewBox="712 22 160 20"><path d="M714.3 30.1H729.6" stroke="#b4d3c1" stroke-width="1.3"/><rect x="784.1" y="24.1" width="13.8" height="13.8" rx="2" fill="none" stroke="#b4d3c1" stroke-width="1.3"/><path d="M852.6 23.7L867.4 38.5M867.4 23.7L852.6 38.5" stroke="#b4d3c1" stroke-width="1.3"/></svg>
<svg style="left:776px;top:68px" width="24" height="22" viewBox="776 68 24 22"><path d="M779.8 71.9H794.2V82H785.6L781.7 86V82H779.8Z" fill="none" stroke="#217346" stroke-width="1.3" stroke-linejoin="miter"/></svg>
<svg style="left:824px;top:68px" width="50" height="22" viewBox="824 68 50 22"><path d="M827.9 76.7V87H841V81.8" fill="none" stroke="#217346" stroke-width="1.3"/><path d="M830.6 81.8C831.5 77.6 834.5 75.6 838.6 75.3V71.2L843.6 76.1L838.6 81V77.6C835 77.6 832.5 79 830.6 81.8Z" fill="none" stroke="#217346" stroke-width="1.2" stroke-linejoin="round"/><path d="M860.3 77.7L864.3 81.6L868.3 77.7" fill="none" stroke="#217346" stroke-width="1.7"/></svg>
<svg style="left:146px;top:132px" width="10" height="6" viewBox="146 132 10 6"><path d="M147.1 133H154L150.55 137Z" fill="#666"/></svg>
<svg style="left:227px;top:125px" width="22" height="20" viewBox="227 125 22 20"><path d="M229.6 128C234 131.5 240 137 245.8 142.6M245.6 128.2C240 132.5 234.5 137.5 229.8 142.6" fill="none" stroke="#bcbcbc" stroke-width="2.2" stroke-linecap="round"/></svg>
<svg style="left:281px;top:125px" width="23" height="20" viewBox="281 125 23 20"><path d="M283.4 137.5L289.5 143L300.8 128.6" fill="none" stroke="#c8c8c8" stroke-width="3" stroke-linejoin="round"/></svg>
<span class="t" style="left:336.40px;top:133.80px;font-size:24.48px;color:#555;font-family:'Liberation Serif',serif;font-weight:bold;font-style:italic;transform:scaleX(0.8727);">f</span>
<span class="t" style="left:346.32px;top:135.80px;font-size:19.38px;color:#555;font-family:'Liberation Serif',serif;font-weight:bold;font-style:italic;transform:scaleX(0.8182);">x</span>
<svg style="left:868px;top:130px" width="14" height="12" viewBox="868 130 14 12"><path d="M869.4 133.2L874.5 138.6L879.6 133.2" fill="none" stroke="#666" stroke-width="2.6"/></svg>
<svg style="left:86px;top:920px" width="24" height="21" viewBox="86 920 24 21"><path d="M95 938.4H88V922.2H107.8V927.5M88 924.8H107.8M90.7 928H96.5M90.7 930.8H94.5M90.7 933.6H94" fill="none" stroke="#444" stroke-width="1.3"/><circle cx="101.7" cy="933.6" r="5.9" fill="#f3f2f1" stroke="#444" stroke-width="1.3"/><circle cx="101.7" cy="933.6" r="2.6" fill="#444"/></svg>
<svg style="left:133px;top:919px" width="25" height="22" viewBox="133 919 25 22"><circle cx="143.3" cy="922.6" r="2.3" fill="none" stroke="#444" stroke-width="1.2"/><path d="M135.6 923.8C134.4 925 135.5 926.6 137.5 926.8L140.8 927.3C141 931 140.7 934.5 138.7 937.2C137.9 938.6 139.2 939.6 140.2 938.6M151 923.8C152.2 925 151.1 926.6 149.1 926.8L145.8 927.3V930.5M144.4 935.7L148.5 939.7L156.2 932" fill="none" stroke="#444" stroke-width="1.2" stroke-linecap="round"/></svg>
<svg style="left:451px;top:918px" width="23" height="22" viewBox="451 918 23 22"><path d="M453.1 920.1H471.1V937.9H453.1ZM459.1 920.1V937.9M465.1 920.1V937.9M453.1 926V926H471.1M453.1 932H471.1" fill="none" stroke="#3b3a39" stroke-width="1.5"/></svg>
<svg style="left:511px;top:918px" width="24" height="22" viewBox="511 918 24 22"><rect x="513.2" y="920.1" width="19.6" height="17.8" fill="none" stroke="#3b3a39" stroke-width="1.5"/><rect x="517.8" y="923.5" width="10.6" height="11.6" fill="none" stroke="#3b3a39" stroke-width="1.4"/><path d="M520.4 926.4H525.8M520.4 929.3H525.8M520.4 932.2H525.8" stroke="#3b3a39" stroke-width="1.2"/></svg>
<svg style="left:571px;top:918px" width="24" height="22" viewBox="571 918 24 22"><rect x="573.2" y="920.1" width="19.6" height="17.8" fill="none" stroke="#3b3a39" stroke-width="1.5"/><path d="M573.2 930.4H585.8V920.1M579.4 920.1V930.4" fill="none" stroke="#3b3a39" stroke-width="1.5"/></svg>
<svg style="left:923px;top:13px" width="22" height="26" viewBox="923 13 22 26"><path d="M927.5 14.8H936.5L942.5 21V34.5Q942.5 36.6 940.4 36.6H927.5Q925.4 36.6 925.4 34.5V16.9Q925.4 14.8 927.5 14.8Z" fill="#f4f4f4" stroke="#f40f02" stroke-width="1.3"/><path d="M933.2 20.2C931.9 20.4 932.6 24 934 26.4C933 28.8 930.6 31 928.8 31.4C927.4 30.3 930.5 28.3 934.5 27.8C937 27.4 939.6 27.8 939.8 28.9C939.6 30 936.4 28.9 934.2 26.4C933 24 933.3 20.3 933.2 20.2Z" fill="none" stroke="#f40f02" stroke-width="1.1" stroke-linejoin="round"/></svg>
<svg style="left:1666px;top:16px" width="162" height="22" viewBox="1666 16 162 22"><path d="M1669.1 26.5H1683.8" stroke="#000" stroke-width="1.1"/><rect x="1738.6" y="19.6" width="14" height="14" fill="none" stroke="#000" stroke-width="1.1"/><path d="M1809.4 19.3L1824 33.9M1824 19.3L1809.4 33.9" stroke="#000" stroke-width="1.1"/></svg>
<svg style="left:1378px;top:69px" width="14" height="14" viewBox="1378 69 14 14"><path d="M1380.6 71.8L1389.6 80.8M1389.6 71.8L1380.6 80.8" stroke="#555" stroke-width="2"/></svg>
<svg style="left:1593px;top:58px" width="36" height="36" viewBox="1593 58 36 36"><circle cx="1611.2" cy="75.65" r="14.3" fill="none" stroke="#707070" stroke-width="3.1"/></svg>
<span class="t" style="left:1606.31px;top:76.60px;font-size:23.66px;color:#707070;font-weight:bold;transform:scaleX(0.6923);">?</span>
<svg style="left:1657px;top:60px" width="30" height="34" viewBox="1657 60 30 34"><path d="M1670.2 62.6Q1670.2 62 1670.8 62H1674.2Q1674.8 62 1674.8 62.6V64.8C1678.4 65.6 1680.4 68.4 1680.4 72V76C1680.4 79.6 1681.6 81.4 1684.6 83.6Q1685 84 1685 84.6V86Q1685 86.6 1684.4 86.6H1660.6Q1660 86.6 1660 86V84.6Q1660 84 1660.4 83.6C1663.4 81.4 1664.6 79.6 1664.6 76V72C1664.6 68.4 1666.6 65.6 1670.2 64.8Z" fill="#a9a9a9"/><path d="M1668.7 88.2H1676.1C1675.6 90.2 1674.2 91.2 1672.4 91.2C1670.6 91.2 1669.2 90.2 1668.7 88.2Z" fill="#a9a9a9"/></svg>
<svg style="left:931px;top:120px" width="34" height="34" viewBox="931 120 34 34"><path d="M935.6 123.5H954.2L961.4 130.7V148.2Q961.4 150.2 959.4 150.2H935.6Q933.6 150.2 933.6 148.2V125.5Q933.6 123.5 935.6 123.5Z" fill="#fafafa" stroke="#b5b5b5" stroke-width="3"/><rect x="941.5" y="123" width="12" height="11" fill="#ebebeb" stroke="#b5b5b5" stroke-width="2.4"/><rect x="948.2" y="126" width="1.4" height="5" fill="#b5b5b5"/><rect x="941.5" y="140.6" width="14" height="10" fill="#ececec" stroke="#b5b5b5" stroke-width="2.4"/></svg>
<svg style="left:994px;top:118px" width="40" height="38" viewBox="994 118 40 38"><path d="M1014 121.8L1018.5 132.6L1030.2 133.5L1021.3 141.2L1024 152.6L1014 146.5L1004 152.6L1006.7 141.2L997.8 133.5L1009.5 132.6Z" fill="none" stroke="#6e6e6e" stroke-width="2.1" stroke-linejoin="miter"/></svg>
<svg style="left:1061px;top:120px" width="38" height="36" viewBox="1061 120 38 36"><path d="M1073.5 144.6H1071.8C1067.8 144.6 1065.2 141.8 1065.2 138.3C1065.2 135 1067.6 132.6 1070.6 132.2C1071 127.2 1075 123.5 1080 123.5C1084.4 123.5 1088 126.3 1089.2 130.4C1092.6 130.8 1095.2 133.7 1095.2 137.4C1095.2 141.5 1092 144.6 1088 144.6H1086.5" fill="none" stroke="#6e6e6e" stroke-width="2.6" stroke-linecap="round"/><path d="M1080 152.6V135.2M1074.6 140L1080 134.6L1085.4 140" fill="none" stroke="#6e6e6e" stroke-width="2.6" stroke-linecap="round" stroke-linejoin="miter"/></svg>
<svg style="left:1129px;top:118px" width="36" height="38" viewBox="1129 118 36 38"><path d="M1145.4 150.2H1134.6Q1132.8 150.2 1132.8 148.4V124.3Q1132.8 122.5 1134.6 122.5H1145L1154.6 132V134.5" fill="none" stroke="#6e6e6e" stroke-width="3" stroke-linejoin="round"/><path d="M1144.6 122.5V132.4H1154.6" fill="none" stroke="#6e6e6e" stroke-width="2.6"/><rect x="1147.8" y="143.6" width="14.7" height="11" rx="2" fill="#6e6e6e"/><path d="M1151 144V141.6A4.1 4.1 0 0 1 1159.2 141.6V144" fill="none" stroke="#6e6e6e" stroke-width="2.4"/></svg>
<svg style="left:1192px;top:119px" width="37" height="35" viewBox="1192 119 37 35"><rect x="1200" y="122.2" width="21" height="10" fill="#fff" stroke="#6e6e6e" stroke-width="2.6"/><rect x="1194.2" y="129.9" width="32.7" height="14.4" rx="3" fill="#6e6e6e"/><rect x="1200" y="139.5" width="21" height="11" fill="#fff" stroke="#6e6e6e" stroke-width="2.6"/><rect x="1201.3" y="139" width="18.4" height="1.8" fill="#dcdcdc"/><path d="M1206 143.4H1215.2M1206 146.2H1215.2" stroke="#6e6e6e" stroke-width="1.3"/><circle cx="1221" cy="134.6" r="1.2" fill="#fff"/></svg>
<svg style="left:1260px;top:119px" width="38" height="38" viewBox="1260 119 38 38"><circle cx="1275.3" cy="134.3" r="11.6" fill="none" stroke="#6e6e6e" stroke-width="3"/><path d="M1284 143L1294.2 153" stroke="#6e6e6e" stroke-width="3.2" stroke-linecap="round"/><circle cx="1269.6" cy="134.3" r="1.4" fill="#6e6e6e"/><circle cx="1275.3" cy="134.3" r="1.4" fill="#6e6e6e"/><circle cx="1281" cy="134.3" r="1.4" fill="#6e6e6e"/></svg>
<svg style="left:1667px;top:119px" width="40" height="36" viewBox="1667 119 40 36"><g fill="none" stroke="#6e6e6e" stroke-width="3"><path d="M1681.8 145.1L1678.94 147.94A5 5 0 0 1 1671.86 140.86L1680.06 132.66A5 5 0 0 1 1687.9 133.7"/><path d="M1684.3 128.4L1688.86 123.86A5 5 0 0 1 1695.94 130.94L1688.44 138.44A5 5 0 0 1 1680.2 136.4"/></g><path d="M1688 152.9C1684.6 152.9 1684 148.6 1687.4 147.6C1687.2 145 1689.4 143.4 1691.6 144C1692.4 140.4 1696.4 139 1699.2 141.2C1700.6 142.4 1701.2 144 1701 145.8C1704.6 145.6 1706 149 1704.6 151.4C1704 152.4 1703 152.9 1701.8 152.9Z" fill="#6e6e6e" stroke="#fafafa" stroke-width="1.8" paint-order="stroke"/></svg>
<svg style="left:1734px;top:121px" width="38" height="30" viewBox="1734 121 38 30"><rect x="1738" y="124.6" width="30" height="23" rx="1.5" fill="none" stroke="#6e6e6e" stroke-width="2.7"/><path d="M1738.5 125.2L1751.6 137.4Q1753 138.6 1754.4 137.4L1767.5 125.2M1738.5 147L1749 136.2M1767.5 147L1757 136.2" fill="none" stroke="#6e6e6e" stroke-width="1.5"/></svg>
<svg style="left:1801px;top:119px" width="40" height="38" viewBox="1801 119 40 38"><defs><clipPath id="uc"><circle cx="1819.1" cy="136.9" r="13.7"/></clipPath></defs><circle cx="1819.1" cy="136.9" r="15.8" fill="#6e6e6e"/><path clip-path="url(#uc)" d="M1819 124.4C1823.4 124.4 1825.6 127.8 1825.4 131.8C1825.2 135 1823.6 137.4 1822.6 138.8C1822.2 140.4 1823 141.6 1825 142.4C1828.4 143.8 1831.6 144.8 1832.6 147V156H1805.4V147C1806.4 144.8 1809.6 143.8 1813 142.4C1815 141.6 1815.8 140.4 1815.4 138.8C1814.4 137.4 1812.8 135 1812.6 131.8C1812.4 127.8 1814.6 124.4 1819 124.4Z" fill="#fafafa"/><circle cx="1831" cy="147.6" r="8.2" fill="#fafafa"/><path d="M1831 141.4V153.6M1824.9 147.5H1837.1" stroke="#6e6e6e" stroke-width="2.4"/></svg>
</body></html>
